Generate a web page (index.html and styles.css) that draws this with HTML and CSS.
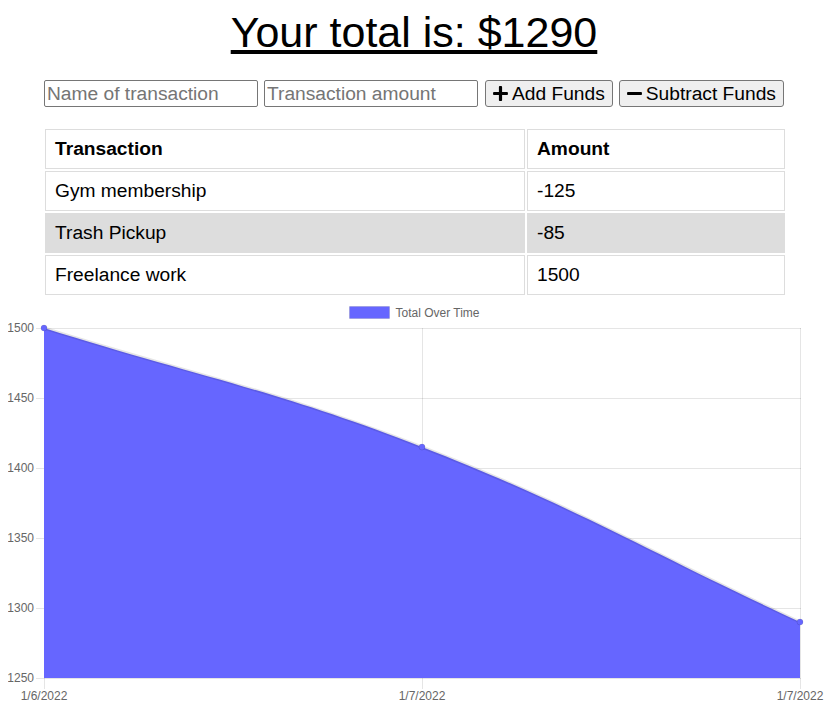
FILE: index.html
```html
<!DOCTYPE html>
<html lang="en">
<head>
<meta charset="utf-8">
<title>Budget Tracker</title>
<link rel="stylesheet" href="styles.css">
</head>
<body>
<div class="page">
  <h1 class="total">Your total is: $1290</h1>

  <div class="form">
    <input class="field" type="text" placeholder="Name of transaction">
    <input class="field" type="text" placeholder="Transaction amount">
    <button class="btn btn-add" type="button">
      <svg class="icon" viewBox="0 0 448 512" aria-hidden="true"><path d="M416 208H272V64c0-17.67-14.330-32-32-32h-32c-17.670 0-32 14.330-32 32v144H32c-17.670 0-32 14.330-32 32v32c0 17.670 14.330 32 32 32h144v144c0 17.670 14.330 32 32 32h32c17.670 0 32-14.330 32-32V304h144c17.670 0 32-14.330 32-32v-32c0-17.670-14.330-32-32-32z"/></svg>
      <span>Add Funds</span>
    </button>
    <button class="btn" type="button">
      <svg class="icon" viewBox="0 0 448 512" aria-hidden="true"><path d="M416 208H32c-17.670 0-32 14.330-32 32v32c0 17.670 14.330 32 32 32h384c17.670 0 32-14.330 32-32v-32c0-17.670-14.330-32-32-32z"/></svg>
      <span>Subtract Funds</span>
    </button>
  </div>

  <table class="ledger">
    <colgroup><col class="col-name"><col class="col-amount"></colgroup>
    <thead>
      <tr><th>Transaction</th><th>Amount</th></tr>
    </thead>
    <tbody>
      <tr><td>Gym membership</td><td>-125</td></tr>
      <tr class="alt"><td>Trash Pickup</td><td>-85</td></tr>
      <tr><td>Freelance work</td><td>1500</td></tr>
    </tbody>
  </table>

  <svg class="chart" viewBox="0 1 829 410" width="829" height="410">
    <!-- legend -->
    <rect class="legend-box" x="341.5" y="10.5" width="40" height="12"/>
    <text class="tick" x="387.5" y="20.5">Total Over Time</text>

    <!-- grid -->
    <g class="grid">
      <line x1="28" y1="32.5" x2="793" y2="32.5"/>
      <line x1="28" y1="102.5" x2="793" y2="102.5"/>
      <line x1="28" y1="172.5" x2="793" y2="172.5"/>
      <line x1="28" y1="242.5" x2="793" y2="242.5"/>
      <line x1="28" y1="312.5" x2="793" y2="312.5"/>
      <line x1="28" y1="382.5" x2="793" y2="382.5"/>
      <line x1="36.5" y1="32" x2="36.5" y2="393"/>
      <line x1="414.5" y1="32" x2="414.5" y2="393"/>
      <line x1="792.5" y1="32" x2="792.5" y2="393"/>
    </g>

    <!-- area -->
    <path class="area" d="M36,32 C187.2,79.6 266.6,93.7 414,151 C569,211.3 640.8,256 792,326 L792,382 L36,382 Z"/>
    <path class="line" d="M36,32 C187.2,79.6 266.6,93.7 414,151 C569,211.3 640.8,256 792,326"/>
    <circle class="dot" cx="36" cy="32" r="3"/>
    <circle class="dot" cx="414" cy="151" r="3"/>
    <circle class="dot" cx="792" cy="326" r="3"/>

    <!-- y labels -->
    <g class="tick y-ticks">
      <text x="26" y="36">1500</text>
      <text x="26" y="106">1450</text>
      <text x="26" y="176">1400</text>
      <text x="26" y="246">1350</text>
      <text x="26" y="316">1300</text>
      <text x="26" y="386">1250</text>
    </g>

    <!-- x labels -->
    <g class="tick x-ticks">
      <text x="36" y="404">1/6/2022</text>
      <text x="414" y="404">1/7/2022</text>
      <text x="792" y="404">1/7/2022</text>
    </g>
  </svg>
</div>
</body>
</html>
```
FILE: styles.css
```css
html, body {
  background: #fff;
}

body {
  margin: 8px;
  font-family: "Liberation Sans", Arial, sans-serif;
  color: #000;
  overflow: hidden;
}

.page {
  width: 812px;
}

.total {
  margin: 0;
  font-size: 43px;
  font-weight: normal;
  line-height: 48px;
  text-align: center;
  text-decoration: underline;
}

.form {
  display: flex;
  gap: 6px;
  margin-top: 24px;
  padding-left: 36px;
  height: 27px;
}

.field {
  box-sizing: border-box;
  width: 214px;
  height: 27px;
  margin: 0;
  padding: 1px 2px;
  font-family: "Liberation Sans", Arial, sans-serif;
  font-size: 19.2px;
  color: #000;
  background: #fff;
  border: 1px solid #767676;
  border-radius: 2px;
}

.field::placeholder {
  color: #757575;
}

.btn {
  box-sizing: border-box;
  display: flex;
  align-items: center;
  gap: 4px;
  height: 27px;
  margin: 0;
  padding: 1px 7px;
  font-family: "Liberation Sans", Arial, sans-serif;
  font-size: 19.2px;
  color: #000;
  background: #efefef;
  border: 1px solid #767676;
  border-radius: 3px;
}

.btn-add {
  margin-left: 1px;
}

.icon {
  width: 15px;
  height: 17px;
  fill: #000;
  flex: none;
}

.ledger {
  width: 744px;
  margin: 20px 0 0 35px;
  border-spacing: 2px;
  table-layout: fixed;
  font-size: 19.2px;
}

.col-name {
  width: 480px;
}

.ledger th,
.ledger td {
  border: 1px solid #ddd;
  padding: 8px 9px;
  line-height: 22px;
  text-align: left;
}

.ledger th {
  font-weight: bold;
}

.ledger .alt td {
  background: #dddddd;
}

.chart {
  display: block;
}

.grid line {
  stroke: rgba(0, 0, 0, 0.1);
  stroke-width: 1;
}

.area {
  fill: #6666ff;
}

.line {
  fill: none;
  stroke: rgba(0, 0, 0, 0.1);
  stroke-width: 3;
}

.dot {
  fill: #6666ff;
  stroke: rgba(0, 0, 0, 0.1);
  stroke-width: 1;
}

.legend-box {
  fill: #6666ff;
  stroke: rgba(0, 0, 0, 0.1);
  stroke-width: 1;
}

.tick {
  font-family: "Liberation Sans", Arial, sans-serif;
  font-size: 12px;
  fill: #666;
}

.y-ticks text {
  text-anchor: end;
}

.x-ticks text {
  text-anchor: middle;
}
```
